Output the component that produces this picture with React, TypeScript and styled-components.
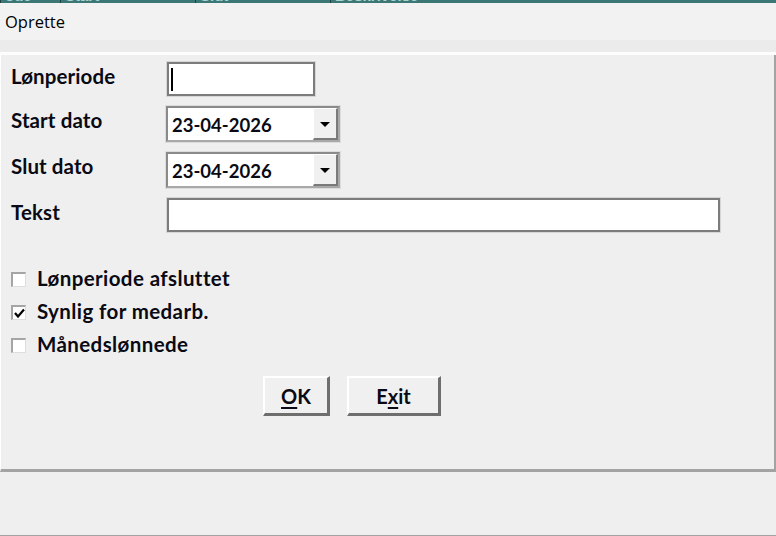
import React, { useState } from 'react';
import styled, { createGlobalStyle } from 'styled-components';

const GlobalStyle = createGlobalStyle`
  html, body {
    margin: 0;
    padding: 0;
    background: #efefef;
  }
  body {
    width: 776px;
    height: 536px;
    overflow: hidden;
    font-family: 'Lato', 'Open Sans', sans-serif;
  }
`;

const Window = styled.div`
  width: 776px;
  height: 536px;
  display: flex;
  flex-direction: column;
  background: #efefef;
`;

const GridStrip = styled.div`
  height: 3px;
  background: #3b7875;
  display: flex;
  overflow: hidden;
`;

const GridHead = styled.div<{ w: number }>`
  width: ${p => p.w}px;
  height: 3px;
  flex: none;
  overflow: hidden;
  border-left: 1px solid #1e4241;
  padding-left: 4px;
  box-sizing: border-box;

  span {
    display: block;
    margin-top: -12px;
    font: bold 15px 'Liberation Sans', sans-serif;
    line-height: 15px;
    color: #a9d2d0;
  }
`;

const TitleBar = styled.div`
  height: 37px;
  background: #f2f2f2;
  font-family: 'Open Sans', sans-serif;
  font-size: 16.5px;
  color: #000;
  padding-left: 5px;
  line-height: 37px;
  box-sizing: border-box;
`;

const Band = styled.div`
  height: 12px;
  background: #ebebeb;
`;

const Highlight = styled.div`
  height: 3px;
  background: #fdfdfd;
`;

const Panel = styled.div`
  height: 417px;
  box-sizing: border-box;
  background: #efefef;
  border-left: 1px solid #ffffff;
  border-right: 2px solid #a3a3a3;
  border-bottom: 3px solid #a3a3a3;
  padding: 7px 0 0 10px;
  display: flex;
  flex-direction: column;
`;

const Form = styled.div`
  display: grid;
  grid-template-columns: 155px auto;
  row-gap: 10px;
  align-items: start;
`;

const Label = styled.div`
  font-weight: 700;
  font-size: 20.5px;
  letter-spacing: 0.1px;
  line-height: 24px;
  padding-top: 2px;
  color: #0a0a14;
`;

const TextBox = styled.div<{ w: number }>`
  width: ${p => p.w}px;
  height: 34px;
  box-sizing: border-box;
  background: #fff;
  border: 2px solid #7c7c7c;
  box-shadow: 0 0 0 1px #d6d6d6;
  margin-left: 1px;
  display: flex;
  align-items: center;
  padding-left: 2px;
`;

const Caret = styled.div`
  width: 2px;
  height: 23px;
  background: #000;
`;

const Combo = styled.div`
  width: 174px;
  height: 36px;
  box-sizing: border-box;
  background: #fff;
  border: 2px solid #8a8a8a;
  border-right-color: #a8a8a8;
  border-bottom-color: #a8a8a8;
  box-shadow: 0 0 0 1px #dcdcdc;
  display: flex;
  align-items: stretch;
`;

const ComboText = styled.div`
  flex: 1;
  font-weight: 700;
  font-size: 18.5px;
  line-height: 34px;
  padding-left: 4px;
  color: #0a0a14;
`;

const DropButton = styled.div`
  width: 25px;
  box-sizing: border-box;
  background: #f0f0f0;
  border-left: 1px solid #ffffff;
  border-top: 1px solid #ffffff;
  border-right: 2px solid #7a7a7a;
  border-bottom: 2px solid #7a7a7a;
  display: flex;
  align-items: center;
  justify-content: center;
`;

const Arrow = styled.div`
  width: 0;
  height: 0;
  border-left: 5px solid transparent;
  border-right: 5px solid transparent;
  border-top: 5px solid #000;
  margin-top: 2px;
`;

const Checks = styled.div`
  margin-top: 34px;
  display: flex;
  flex-direction: column;
  gap: 9px;
`;

const CheckRow = styled.label`
  display: flex;
  align-items: center;
  gap: 11px;
  height: 24px;
  font-weight: 700;
  font-size: 20.5px;
  letter-spacing: 0.4px;
  color: #0a0a14;
  cursor: default;
`;

const Box = styled.div`
  width: 15px;
  height: 15px;
  box-sizing: border-box;
  background: #fff;
  border-top: 2px solid #a5a5a5;
  border-left: 2px solid #a5a5a5;
  border-right: 1px solid #dedede;
  border-bottom: 1px solid #dedede;
  margin-top: 2px;
  display: flex;
  align-items: center;
  justify-content: center;
`;

const Buttons = styled.div`
  display: flex;
  gap: 17px;
  margin: 20px 0 0 252px;
`;

const Button = styled.button<{ w: number }>`
  width: ${p => p.w}px;
  height: 40px;
  box-sizing: border-box;
  background: #f0f0f0;
  border-top: 2px solid #ffffff;
  border-left: 2px solid #ffffff;
  border-right: 3px solid #6e6e6e;
  border-bottom: 3px solid #6e6e6e;
  font-family: 'Lato', sans-serif;
  font-weight: 700;
  font-size: 20px;
  color: #0a0a14;
  padding: 0;
  cursor: default;

  u {
    text-decoration-thickness: 2px;
    text-underline-offset: 3px;
  }
`;

const Footer = styled.div`
  flex: 1;
  background: #efefef;
  border-bottom: 1px solid #a3a3a3;
`;

const CheckMark = () => (
  <svg width="11" height="10" viewBox="0 0 11 10">
    <path d="M1 5 L4 8.5 L10 1.5" fill="none" stroke="#000" strokeWidth="2.2" />
  </svg>
);

const checks = [
  { label: 'Lønperiode afsluttet', checked: false },
  { label: 'Synlig for medarb.', checked: true },
  { label: 'Månedslønnede', checked: false },
];

export default function App() {
  const [state] = useState(checks);

  return (
    <Window>
      <GlobalStyle />
      <GridStrip>
        <GridHead w={60}><span>ode</span></GridHead>
        <GridHead w={135}><span>Start</span></GridHead>
        <GridHead w={135}><span>Slut</span></GridHead>
        <GridHead w={446}><span>Beskrivelse</span></GridHead>
      </GridStrip>
      <TitleBar>Oprette</TitleBar>
      <Band />
      <Highlight />
      <Panel>
        <Form>
          <Label>Lønperiode</Label>
          <TextBox w={148}>
            <Caret />
          </TextBox>

          <Label>Start dato</Label>
          <Combo>
            <ComboText>23-04-2026</ComboText>
            <DropButton>
              <Arrow />
            </DropButton>
          </Combo>

          <Label>Slut dato</Label>
          <Combo>
            <ComboText>23-04-2026</ComboText>
            <DropButton>
              <Arrow />
            </DropButton>
          </Combo>

          <Label>Tekst</Label>
          <TextBox w={553} />
        </Form>

        <Checks>
          {state.map(c => (
            <CheckRow key={c.label}>
              <Box>{c.checked && <CheckMark />}</Box>
              {c.label}
            </CheckRow>
          ))}
        </Checks>

        <Buttons>
          <Button w={67}>
            <u>O</u>K
          </Button>
          <Button w={94}>
            E<u>x</u>it
          </Button>
        </Buttons>
      </Panel>
      <Footer />
    </Window>
  );
}
